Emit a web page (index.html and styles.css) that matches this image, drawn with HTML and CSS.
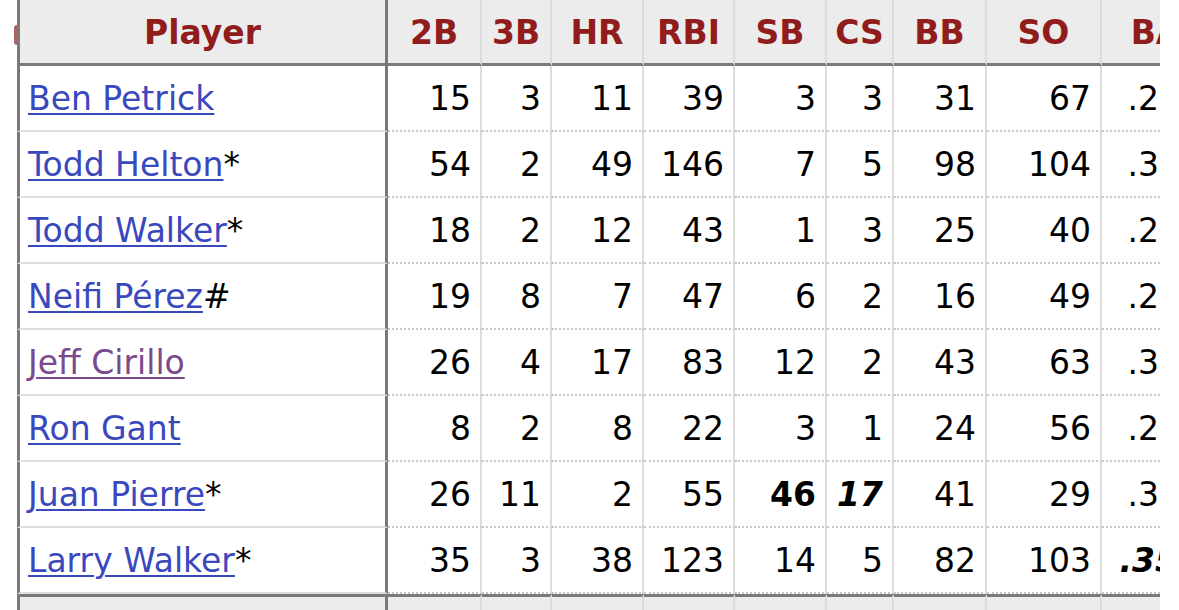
FILE: index.html
```html
<!DOCTYPE html>
<html lang="en">
<head>
<meta charset="utf-8">
<title>Batting</title>
<link rel="stylesheet" href="styles.css">
</head>
<body>
<div class="frame">
  <span class="peek" aria-hidden="true"></span>
  <table class="stats">
    <colgroup>
      <col class="c-player">
      <col class="c-94"><col class="c-70"><col class="c-92"><col class="c-91">
      <col class="c-92"><col class="c-67"><col class="c-93"><col class="c-115"><col class="c-110">
    </colgroup>
    <thead>
      <tr>
        <th class="player">Player</th>
        <th>2B</th><th>3B</th><th>HR</th><th>RBI</th><th>SB</th><th>CS</th><th>BB</th><th>SO</th><th>BA</th>
      </tr>
    </thead>
    <tbody>
      <tr>
        <td class="player"><a href="#p1">Ben Petrick</a></td>
        <td>15</td><td>3</td><td>11</td><td>39</td><td>3</td><td>3</td><td>31</td><td>67</td><td>.238</td>
      </tr>
      <tr>
        <td class="player"><a href="#p2">Todd Helton</a>*</td>
        <td>54</td><td>2</td><td>49</td><td>146</td><td>7</td><td>5</td><td>98</td><td>104</td><td>.336</td>
      </tr>
      <tr>
        <td class="player"><a href="#p3">Todd Walker</a>*</td>
        <td>18</td><td>2</td><td>12</td><td>43</td><td>1</td><td>3</td><td>25</td><td>40</td><td>.297</td>
      </tr>
      <tr>
        <td class="player"><a href="#p4">Neifi Pérez</a>#</td>
        <td>19</td><td>8</td><td>7</td><td>47</td><td>6</td><td>2</td><td>16</td><td>49</td><td>.279</td>
      </tr>
      <tr>
        <td class="player"><a class="visited" href="#p5">Jeff Cirillo</a></td>
        <td>26</td><td>4</td><td>17</td><td>83</td><td>12</td><td>2</td><td>43</td><td>63</td><td>.313</td>
      </tr>
      <tr>
        <td class="player"><a href="#p6">Ron Gant</a></td>
        <td>8</td><td>2</td><td>8</td><td>22</td><td>3</td><td>1</td><td>24</td><td>56</td><td>.254</td>
      </tr>
      <tr>
        <td class="player"><a href="#p7">Juan Pierre</a>*</td>
        <td>26</td><td>11</td><td>2</td><td>55</td><td class="lead">46</td><td class="lead-all">17</td><td>41</td><td>29</td><td>.327</td>
      </tr>
      <tr>
        <td class="player"><a href="#p8">Larry Walker</a>*</td>
        <td>35</td><td>3</td><td>38</td><td>123</td><td>14</td><td>5</td><td>82</td><td>103</td><td class="lead-all">.350</td>
      </tr>
    </tbody>
    <tfoot>
      <tr>
        <td class="player"></td>
        <td></td><td></td><td></td><td></td><td></td><td></td><td></td><td></td><td></td>
      </tr>
    </tfoot>
  </table>
</div>
</body>
</html>
```
FILE: styles.css
```css
html, body {
  margin: 0;
  padding: 0;
  background: #ffffff;
  overflow: hidden;
}

.frame {
  position: relative;
  padding-left: 17px;
  width: 1143px;
  height: 610px;
  overflow: hidden;
}

.peek {
  position: absolute;
  left: 14px;
  top: 25px;
  width: 3px;
  height: 20px;
  border-radius: 3px 0 0 3px;
  background: #8a3030;
  opacity: 0.75;
}

.stats {
  border-collapse: separate;
  border-spacing: 0;
  table-layout: fixed;
  width: 1195px;
  font-family: "DejaVu Sans", Verdana, sans-serif;
  font-size: 33px;
  color: #000000;
}

.c-player { width: 371px; }
.c-94 { width: 94px; }
.c-70 { width: 70px; }
.c-92 { width: 92px; }
.c-91 { width: 91px; }
.c-67 { width: 67px; }
.c-93 { width: 93px; }
.c-115 { width: 115px; }
.c-110 { width: 110px; }

.stats th,
.stats td {
  box-sizing: border-box;
  padding: 0 9px 0 0;
  white-space: nowrap;
  overflow: hidden;
  border-right: 2px solid #dcdcdc;
}

.stats th {
  background: #ececec;
  color: #901c1c;
  font-weight: bold;
  text-align: center;
  padding: 3px 0 0 0;
  line-height: 60px;
  border-bottom: 3px solid #7a7a7a;
}

.stats tbody td {
  text-align: right;
  padding-top: 2px;
  line-height: 62px;
  border-bottom: 2px dotted #c8c8c8;
}

.stats .player {
  border-left: 3px solid #7a7a7a;
  border-right: 3px solid #7a7a7a;
  text-align: left;
  padding-left: 8px;
}

.stats th.player {
  text-align: center;
  padding-left: 0;
}

.stats tbody td.player {
  border-bottom: 2px solid #dedede;
}

.stats tfoot td {
  background: #ececec;
  height: 30px;
  line-height: 30px;
  border-top: 3px solid #7a7a7a;
}

.stats a {
  color: #3a48be;
  text-decoration: underline;
  text-decoration-thickness: 2px;
  text-underline-offset: 3px;
}

.stats a.visited {
  color: #7b4a8c;
}

.lead {
  font-weight: bold;
}

.lead-all {
  font-weight: bold;
  font-style: italic;
}
```
